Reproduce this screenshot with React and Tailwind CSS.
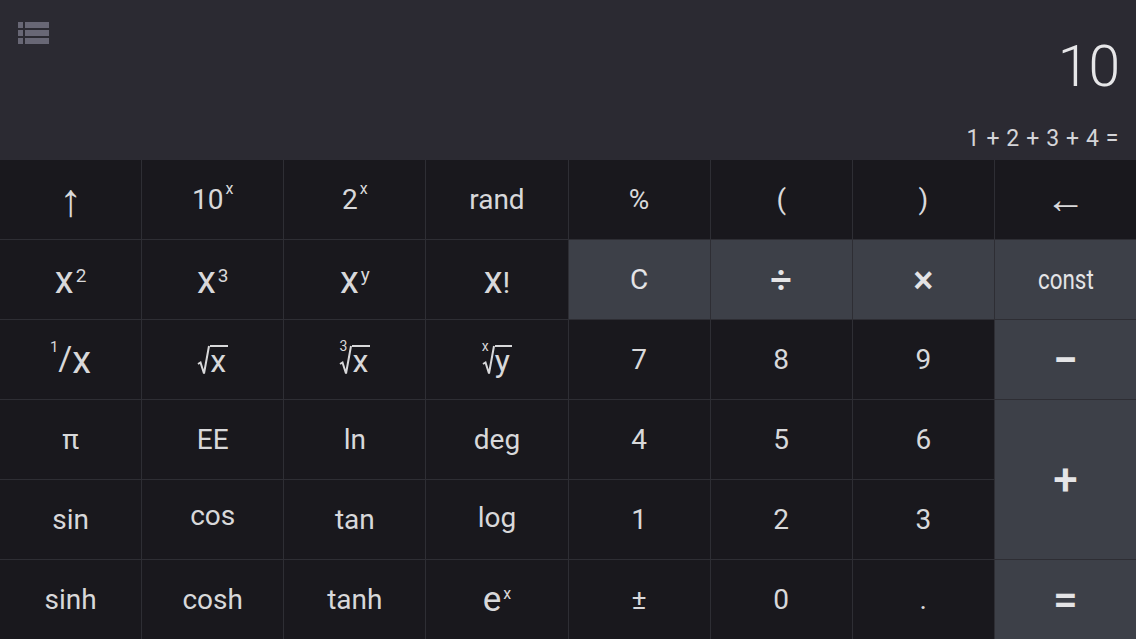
import React from 'react';

const font = { fontFamily: 'Roboto, "Liberation Sans", sans-serif' };

// base + raised small text, aligned on baseline then lifted
const Sup = ({ base, sup, supClass = 'text-[16px] top-[-15px]' }) => (
  <span className="inline-flex items-baseline">
    <span>{base}</span>
    <span className={`relative ml-[2px] leading-none ${supClass}`}>{sup}</span>
  </span>
);

const Root = ({ idx, rad }) => (
  <span className="inline-flex items-start h-[30px]">
    <span className="relative w-[13px] h-[30px]">
      {idx && <span className="absolute left-[0px] top-[-6px] text-[14px] leading-none">{idx}</span>}
      <svg width="13" height="30" viewBox="0 0 13 30" className="block">
        <path d="M1 19 L3.5 17.5 L7 28.5 L12 1" stroke="#d8d8da" strokeWidth="2" fill="none" strokeLinejoin="miter" />
      </svg>
    </span>
    <span className="border-t-2 border-[#d8d8da] text-[32px] leading-[26px] pr-[2px] pt-[1px]">{rad}</span>
  </span>
);

const X = ({ children = 'x' }) => <span className="text-[38px]">{children}</span>;

const KEYS = [
  // row 1
  { label: '↑', cls: 'text-[46px]' },
  { label: <Sup base="10" sup="x" /> },
  { label: <Sup base="2" sup="x" /> },
  { label: 'rand' },
  { label: '%' },
  { label: '(' },
  { label: ')' },
  { label: '←', cls: 'text-[40px]' },
  // row 2
  { label: <Sup base={<X />} sup="2" supClass="text-[19px] top-[-11px]" /> },
  { label: <Sup base={<X />} sup="3" supClass="text-[19px] top-[-11px]" /> },
  { label: <Sup base={<X />} sup="y" supClass="text-[19px] top-[-12px]" /> },
  { label: <span className="inline-flex items-baseline"><X /><span className="text-[30px]">!</span></span> },
  { label: 'C', op: true },
  { label: '÷', op: true, cls: 'text-[38px] font-medium' },
  { label: '×', op: true, cls: 'text-[38px] font-medium' },
  { label: <span className="inline-block scale-x-[0.8]">const</span>, op: true, cls: 'text-[27px]' },
  // row 3
  {
    label: (
      <span className="inline-flex items-start">
        <span className="text-[15px] leading-none mt-[-1px]">1</span>
        <span className="text-[34px] leading-none">/</span>
        <X />
      </span>
    ),
  },
  { label: <Root rad="x" /> },
  { label: <Root idx="3" rad="x" /> },
  { label: <Root idx="x" rad="y" /> },
  { label: '7' },
  { label: '8' },
  { label: '9' },
  { label: '−', op: true, cls: 'text-[44px] font-bold' },
  // row 4
  { label: 'π' },
  { label: 'EE' },
  { label: 'ln' },
  { label: 'deg' },
  { label: '4' },
  { label: '5' },
  { label: '6' },
  { label: '+', op: true, span: true, cls: 'text-[44px] font-medium' },
  // row 5
  { label: 'sin' },
  { label: <span className="relative top-[-4px]">cos</span> },
  { label: 'tan' },
  { label: <span className="relative top-[-2px]">log</span> },
  { label: '1' },
  { label: '2' },
  { label: '3' },
  // row 6
  { label: 'sinh' },
  { label: 'cosh' },
  { label: 'tanh' },
  { label: <Sup base={<span className="text-[35px]">e</span>} sup="x" supClass="text-[16px] top-[-12px]" /> },
  { label: '±' },
  { label: '0' },
  { label: '.' },
  { label: '=', op: true, cls: 'text-[44px] font-medium' },
];

function MenuIcon() {
  return (
    <svg width="34" height="26" viewBox="0 0 34 26" className="block">
      {[0, 8, 16].map(y => (
        <g key={y} fill="#686775">
          <rect x="1" y={y + 1} width="5" height="6" />
          <rect x="8" y={y + 1} width="24" height="6" />
        </g>
      ))}
    </svg>
  );
}

export default function App() {
  return (
    <div className="w-[1136px] h-[639px] flex flex-col bg-[#2b2a32] overflow-hidden select-none" style={font}>
      {/* Display */}
      <div className="h-[160px] shrink-0 bg-[#2b2a32] flex flex-col pl-[17px] pr-[17px] pt-[21px] pb-[10px]">
        <div className="flex justify-between items-start">
          <MenuIcon />
          <div className="text-[57px] font-light leading-none text-[#e6e6e8] mt-[17px] tracking-[-1px]">10</div>
        </div>
        <div className="mt-auto text-right text-[23px] leading-none text-[#d4d4d8] tracking-[0.6px]">1 + 2 + 3 + 4 =</div>
      </div>

      {/* Keypad */}
      <div className="flex-1 grid grid-cols-8 grid-rows-6 gap-px bg-[#2e2e34]">
        {KEYS.map((k, i) => (
          <button
            key={i}
            className={`flex items-center justify-center text-[28px] leading-none ${
              k.op ? 'bg-[#3d4048] text-[#e4e4e6]' : 'bg-[#19181d] text-[#d8d8da]'
            } ${k.span ? 'row-span-2' : ''} ${k.cls || ''}`}
          >
            {k.label}
          </button>
        ))}
      </div>
    </div>
  );
}
